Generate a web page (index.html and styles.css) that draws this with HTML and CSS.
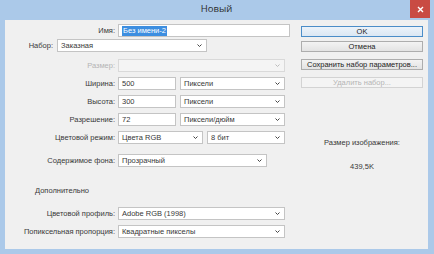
FILE: index.html
```html
<!DOCTYPE html>
<html lang="ru">
<head>
    <meta charset="UTF-8">
    <title>Новый</title>
    <link rel="stylesheet" href="styles.css">
</head>
<body>
    <div class="window">
        <div class="titlebar">
            <span class="title">Новый</span>
            <span class="close">
                <svg width="7" height="7" viewBox="0 0 7 7"><path d="M1 1 L6 6 M6 1 L1 6" stroke="#fff" stroke-width="1.4"/></svg>
            </span>
        </div>

        <div class="dialog">
            <div class="form">
                <div class="row">
                    <label class="lbl">Имя:</label>
                    <div class="field name"><span class="picked">Без имени-2</span></div>
                </div>

                <div class="row row-preset">
                    <label class="lbl lbl-short">Набор:</label>
                    <div class="field select w-preset">Заказная<svg class="chev" width="5" height="3" viewBox="0 0 5 3"><path d="M0.5 0.5 L2.5 2.5 L4.5 0.5" fill="none" stroke="#444" stroke-width="1"/></svg></div>
                </div>

                <div class="row row-size disabled">
                    <label class="lbl">Размер:</label>
                    <div class="field select w-full"><svg class="chev" width="5" height="3" viewBox="0 0 5 3"><path d="M0.5 0.5 L2.5 2.5 L4.5 0.5" fill="none" stroke="#bbb" stroke-width="1"/></svg></div>
                </div>

                <div class="row row-gap">
                    <label class="lbl">Ширина:</label>
                    <div class="field w-num">500</div>
                    <div class="field select w-unit">Пиксели<svg class="chev" width="5" height="3" viewBox="0 0 5 3"><path d="M0.5 0.5 L2.5 2.5 L4.5 0.5" fill="none" stroke="#444" stroke-width="1"/></svg></div>
                </div>

                <div class="row row-gap">
                    <label class="lbl">Высота:</label>
                    <div class="field w-num">300</div>
                    <div class="field select w-unit">Пиксели<svg class="chev" width="5" height="3" viewBox="0 0 5 3"><path d="M0.5 0.5 L2.5 2.5 L4.5 0.5" fill="none" stroke="#444" stroke-width="1"/></svg></div>
                </div>

                <div class="row row-gap">
                    <label class="lbl">Разрешение:</label>
                    <div class="field w-num">72</div>
                    <div class="field select w-unit">Пиксели/дюйм<svg class="chev" width="5" height="3" viewBox="0 0 5 3"><path d="M0.5 0.5 L2.5 2.5 L4.5 0.5" fill="none" stroke="#444" stroke-width="1"/></svg></div>
                </div>

                <div class="row row-gap">
                    <label class="lbl">Цветовой режим:</label>
                    <div class="field select w-mode">Цвета RGB<svg class="chev" width="5" height="3" viewBox="0 0 5 3"><path d="M0.5 0.5 L2.5 2.5 L4.5 0.5" fill="none" stroke="#444" stroke-width="1"/></svg></div>
                    <div class="field select w-bits">8 бит<svg class="chev" width="5" height="3" viewBox="0 0 5 3"><path d="M0.5 0.5 L2.5 2.5 L4.5 0.5" fill="none" stroke="#444" stroke-width="1"/></svg></div>
                </div>

                <div class="row row-bg">
                    <label class="lbl">Содержимое фона:</label>
                    <div class="field select w-bg">Прозрачный<svg class="chev" width="5" height="3" viewBox="0 0 5 3"><path d="M0.5 0.5 L2.5 2.5 L4.5 0.5" fill="none" stroke="#444" stroke-width="1"/></svg></div>
                </div>

                <div class="extra-title">Дополнительно</div>

                <div class="row row-profile">
                    <label class="lbl">Цветовой профиль:</label>
                    <div class="field select w-full">Adobe RGB (1998)<svg class="chev" width="5" height="3" viewBox="0 0 5 3"><path d="M0.5 0.5 L2.5 2.5 L4.5 0.5" fill="none" stroke="#444" stroke-width="1"/></svg></div>
                </div>

                <div class="row row-gap">
                    <label class="lbl">Попиксельная пропорция:</label>
                    <div class="field select w-full">Квадратные пикселы<svg class="chev" width="5" height="3" viewBox="0 0 5 3"><path d="M0.5 0.5 L2.5 2.5 L4.5 0.5" fill="none" stroke="#444" stroke-width="1"/></svg></div>
                </div>
            </div>

            <div class="side">
                <button class="btn btn-default">OK</button>
                <button class="btn btn-cancel">Отмена</button>
                <button class="btn btn-group">Сохранить набор параметров...</button>
                <button class="btn btn-group" disabled>Удалить набор...</button>

                <div class="size-info">
                    <div>Размер изображения:</div>
                    <div class="size-value">439,5K</div>
                </div>
            </div>
        </div>
    </div>
</body>
</html>
```

FILE: styles.css
```css
* {
    margin: 0;
    padding: 0;
    box-sizing: border-box;
}

body {
    width: 434px;
    height: 254px;
    overflow: hidden;
    font-family: "Liberation Sans", Arial, sans-serif;
    font-size: 7.5px;
    color: #383838;
    background: #abc9e9;
}

.window {
    height: 254px;
    padding: 0 6px 5px 5px;
    display: flex;
    flex-direction: column;
}

.titlebar {
    height: 20px;
    flex: none;
    display: grid;
    grid-template-columns: 1fr auto 1fr;
    align-items: start;
}

.title {
    grid-column: 2;
    font-family: "Open Sans", sans-serif;
    font-size: 9.5px;
    line-height: 18px;
    color: #2a2a2a;
}

.close {
    grid-column: 3;
    justify-self: end;
    margin-right: -2px;
    width: 20px;
    height: 18px;
    background: #c94b43;
    display: flex;
    align-items: center;
    justify-content: center;
}

.dialog {
    flex: 1;
    display: flex;
    background: #f0f0f0;
}

.form {
    flex: 1;
    padding-top: 4px;
}

.row {
    display: flex;
    align-items: center;
    height: 13px;
}

.lbl {
    width: 113px;
    padding-right: 3px;
    text-align: right;
    white-space: nowrap;
}

.lbl-short {
    width: 52px;
    padding-right: 4px;
}

.row-preset { margin-top: 2px; }
.row-size { margin-top: 7px; }
.row-gap { margin-top: 5px; }
.row-bg { margin-top: 10px; }
.row-profile { margin-top: 12px; }

.field {
    height: 13px;
    border: 1px solid #c4c4c4;
    background: #fff;
    padding: 0 4px 0 3px;
    display: flex;
    align-items: center;
    white-space: nowrap;
}

.field + .field {
    margin-left: 4px;
}

.chev {
    margin-left: auto;
}

.name { width: 172px; }
.w-preset { width: 150px; }
.w-full { width: 167px; }
.w-num { width: 58px; }
.w-unit { width: 105px; }
.w-mode { width: 85px; }
.w-bits { width: 78px; }
.w-bg { width: 149px; }

.picked {
    background: #3d8ee0;
    color: #fff;
    padding: 0 1px;
    line-height: 10px;
}

.disabled .lbl {
    color: #b4b4b4;
}

.disabled .field {
    background: #f4f4f4;
    border-color: #d9d9d9;
}

.extra-title {
    margin-top: 19px;
    padding-left: 30px;
    line-height: 9px;
}

.side {
    width: 122px;
    margin-right: 5px;
    padding-top: 6px;
    display: flex;
    flex-direction: column;
}

.btn {
    height: 11px;
    font-family: inherit;
    font-size: 7.5px;
    color: #222;
    border: 1px solid #adadad;
    background: linear-gradient(#f3f3f3, #e3e3e3);
    line-height: 9px;
}

.btn-default {
    border-color: #4b8dc8;
    background: linear-gradient(#ecf3fa, #dbe7f3);
}

.btn-cancel { margin-top: 4px; }
.btn-group { margin-top: 7px; }

.btn:disabled {
    color: #b4b4b4;
    border-color: #d3d3d3;
    background: #f4f4f4;
}

.size-info {
    margin-top: 50px;
    text-align: center;
    line-height: 10px;
}

.size-value {
    margin-top: 14px;
}
```
